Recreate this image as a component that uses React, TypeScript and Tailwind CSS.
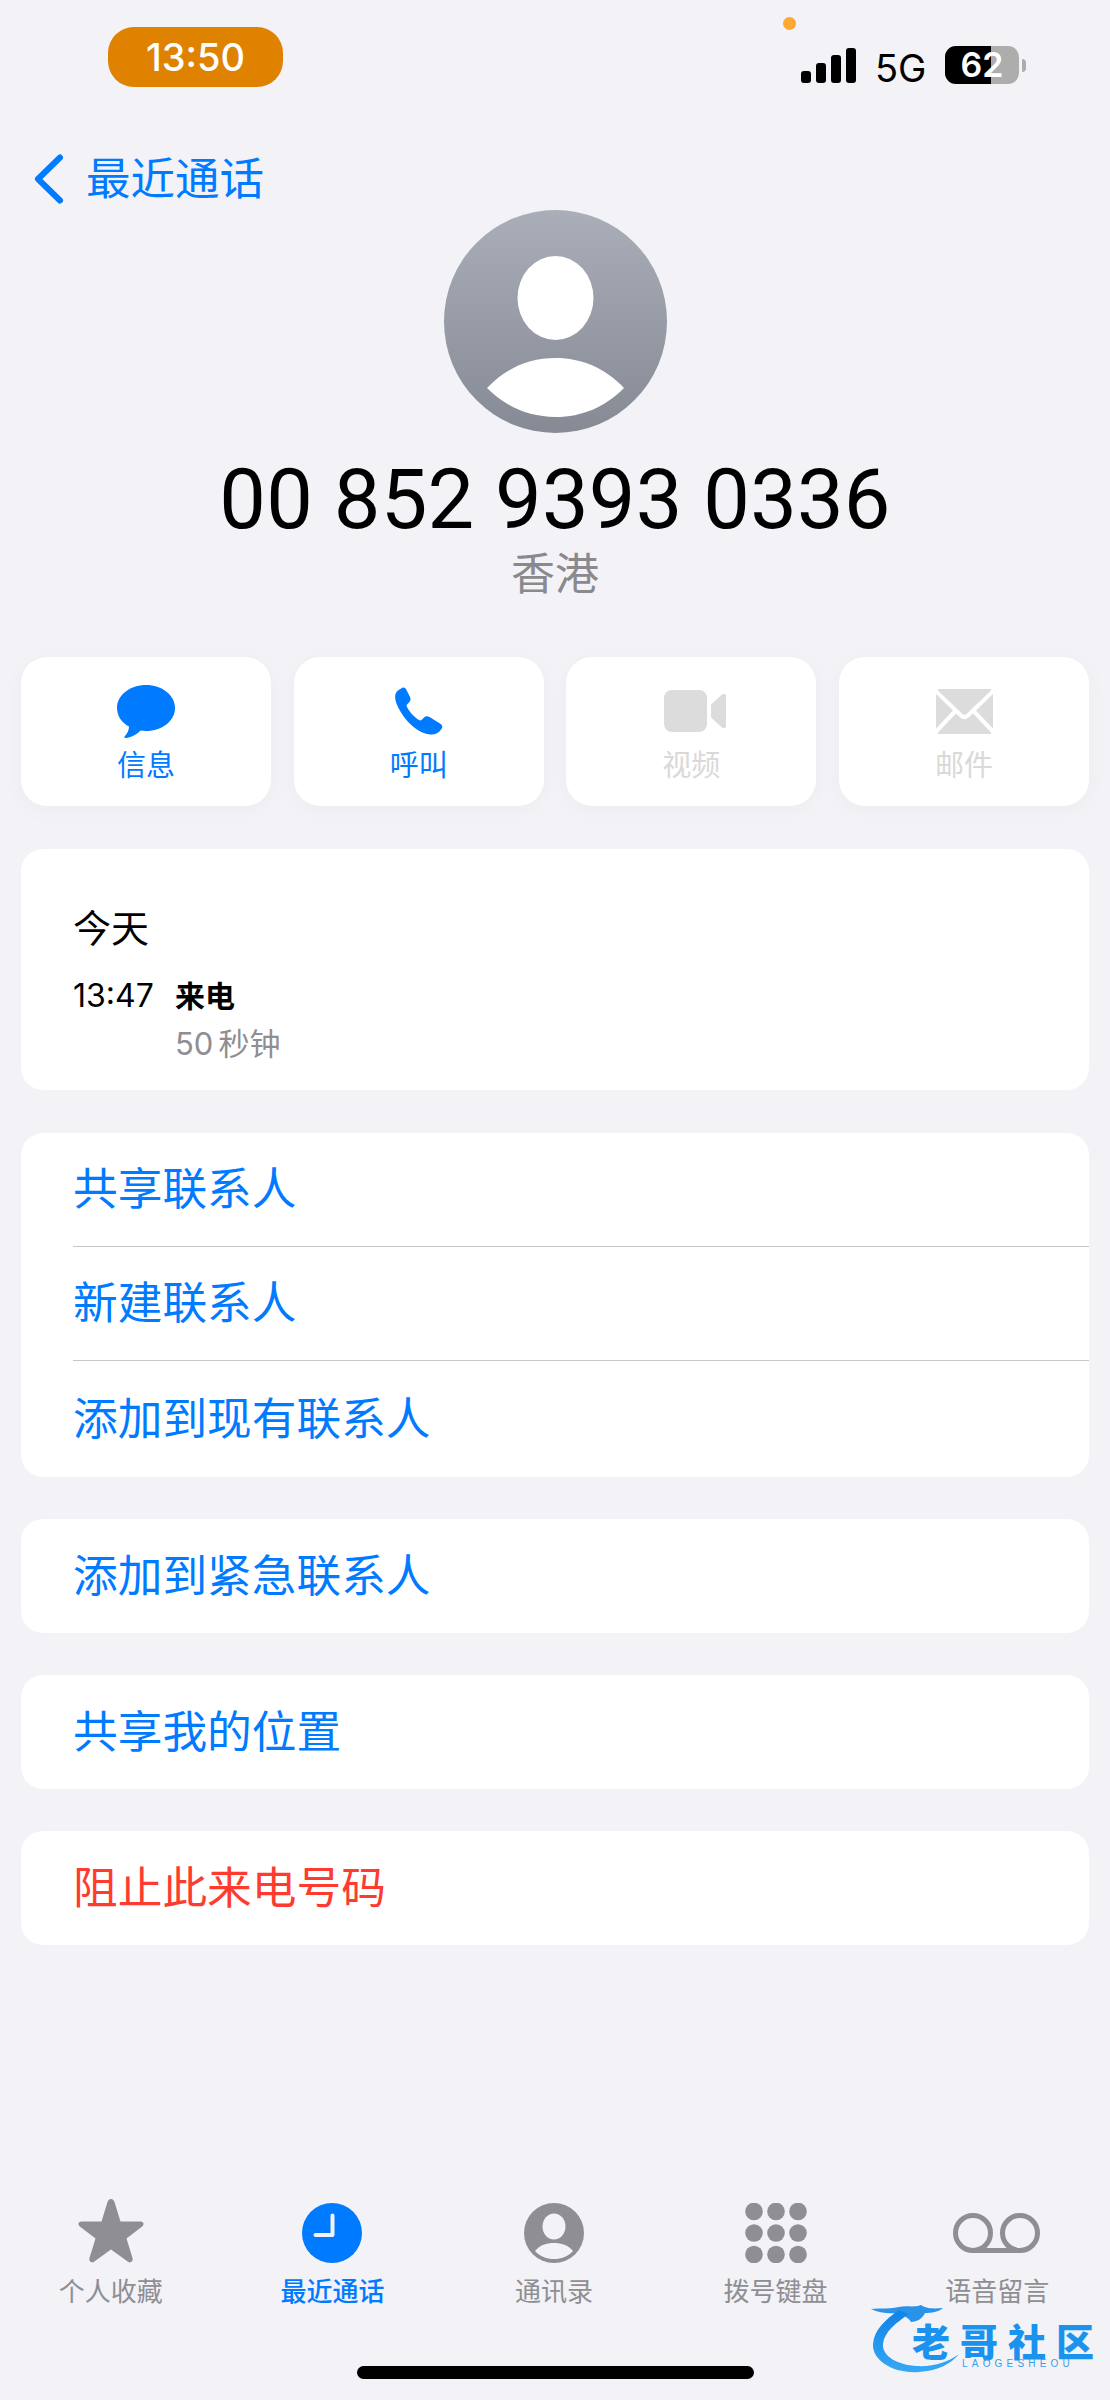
import React from "react";

const ACTIONS = [
  { label: "信息", on: true, icon: <svg width="58" height="53" viewBox="0 0 58 53"><path fill="#007aff" d="M29 0C45 0 58 10 58 23C58 36 45 46 29 46C27 46 25 45.800 23.500 45.500C20 49.500 14 52.500 8.500 53C7.500 53 7 52 7.800 51.200C10 49 12 45.500 12 41.500C4.500 37.500 0 30.800 0 23C0 10 13 0 29 0Z" /></svg> },
  { label: "呼叫", on: true, icon: <svg width="49" height="48" viewBox="0 0 49 48"><path fill="#007aff" d="M8 1C10 0 11.500 1 12.500 3L16 10C17 12.500 16.500 14 15 15.500L13 17.500C12.500 18.200 12.500 19 13 20C15.500 25 20.500 30.500 25 33C26 33.500 27 33.500 27.500 33L30 30.500C31.500 29 33.500 29 35.500 30L46 36.500C48.500 38 49 40 47.500 42C44.500 46 41 48 36 47.500C26 46.500 15 38 8 27C3 19 0 12 1.500 7C2.500 4 5 2.500 8 1Z" /></svg> },
  { label: "视频", on: false, icon: <svg className="ml-[7px]" width="62" height="42" viewBox="0 0 62 42"><rect x="0" y="0" width="43" height="42" rx="8" fill="#dcdcdc" /><path fill="#dcdcdc" d="M47 14.500L58 4.500C59.500 3.300 62 3.800 62 6V36C62 38.200 59.500 38.700 58 37.500L47 27.500Z" /></svg> },
  { label: "邮件", on: false, icon: <svg width="57" height="45" viewBox="0 0 57 45"><path fill="#dcdcdc" d="M3 0H54C55 0 55.500 .8 55 1.500L30.500 25C29.300 26.200 27.700 26.200 26.500 25L2 1.500C1.500 .8 2 0 3 0Z" /><path fill="#dcdcdc" d="M0 5L17 21.500L0 39.500Z M57 5L40 21.500L57 39.500Z" /><path fill="#dcdcdc" d="M20 24.500L24 28.300C26.800 30.800 30.200 30.800 33 28.300L37 24.500L55 43.500C55.500 44.300 55 45 54 45H3C2 45 1.500 44.300 2 43.500Z" /></svg> },
];

function Row({ label, red, line }: { label: string; red?: boolean; line?: boolean }) {
  return (
    <div className="pl-[52px] h-[114px] flex flex-col">
      <div className={`flex-1 flex items-center text-[44.700px] leading-none ${red ? "text-[#ff3b30]" : "text-[#007aff]"} ${line ? "border-b border-[#c6c6c8]" : ""}`}>
        {label}
      </div>
    </div>
  );
}

const TABS = [
  { label: "个人收藏", icon: <svg width="66" height="64" viewBox="0 0 66 64"><path fill="#8e8e93" d="M33 0C35 0 36 1.500 36.500 3L42.500 22.500H62.500C65.500 22.500 66.500 25.500 64.500 27.200L48.500 39.500L54.500 59C55.500 62.500 52.500 64.500 50 62.800L33 50.500L16 62.800C13.500 64.500 10.500 62.500 11.500 59L17.500 39.500L1.500 27.200C-.5 25.500 .5 22.500 3.500 22.500H23.500L29.500 3C30 1.500 31 0 33 0Z" /></svg> },
  { label: "最近通话", active: true, icon: <svg width="60" height="60" viewBox="0 0 60 60"><circle cx="30" cy="30" r="30" fill="#007aff" /><path d="M30.500 12.500V32H13.500" fill="none" stroke="#f2f2f7" strokeWidth="4" strokeLinecap="round" strokeLinejoin="round" /></svg> },
  { label: "通讯录", icon: <svg width="60" height="60" viewBox="0 0 60 60"><circle cx="30" cy="30" r="30" fill="#8e8e93" /><ellipse cx="30" cy="23.500" rx="11.500" ry="13" fill="#f2f2f7" /><path fill="#f2f2f7" d="M11 48C16 42 22.500 40 30 40C37.500 40 44 42 49 48C44 53.500 37.500 56 30 56C22.500 56 16 53.500 11 48Z" /></svg> },
  { label: "拨号键盘", icon: <svg width="62" height="60" viewBox="0 0 62 60">{[9, 31, 53].flatMap((x) => [8.500, 30, 51.500].map((y) => <circle key={`${x}-${y}`} cx={x} cy={y} r="8.800" fill="#8e8e93" />))}</svg> },
  { label: "语音留言", icon: <svg width="90" height="60" viewBox="0 0 90 60"><g fill="none" stroke="#8e8e93" strokeWidth="5"><circle cx="21" cy="30" r="17.500" /><circle cx="68" cy="30" r="17.500" /><path d="M21 47.500H68" /></g></svg> },
];

function Watermark() {
  return (
    <div className="absolute left-[871px] top-[2300px] w-[224px] h-[74px]">
      <svg className="absolute left-0 top-0" width="224" height="74" viewBox="0 0 224 74">
        <defs>
          <linearGradient id="dr" x1="0" y1="0" x2="0" y2="1">
            <stop offset="0" stopColor="#0f82e6" />
            <stop offset="1" stopColor="#35a8f5" />
          </linearGradient>
        </defs>
        <path fill="url(#dr)" d="M28 10C14 20 3 30 2 44C1 60 22 74 48 72C66 71 80 64 88 54C78 62 62 67 46 66C26 65 11 56 12 44C13 32 26 22 38 14Z" />
        <path fill="#1388e8" opacity=".9" d="M0 9C10 8 20 9 28 7C36 5 42 8 50 5C54 8 60 9 72 8C68 12 60 13 54 13C52 18 46 22 40 22C38 18 32 15 26 13C18 14 8 13 0 9Z" />
      </svg>
      <div className="absolute left-[41px] top-[23px] w-[182px] h-[34px] flex justify-between text-[38px] leading-[34px] font-black text-[#1b93ee] font-['Noto_Sans_CJK_SC',sans-serif]">
        <span>老</span><span>哥</span><span>社</span><span>区</span>
      </div>
      <div className="absolute left-[91px] top-[58px] text-[10px] leading-[11px] tracking-[4.200px] font-medium text-[#3a9fe8] font-['Liberation_Sans',sans-serif]">LAOGESHEOU</div>
    </div>
  );
}

export default function App() {
  return (
    <div className="relative w-[1110px] h-[2400px] bg-[#f2f2f7] flex flex-col overflow-hidden font-['Inter','Noto_Sans_CJK_SC',sans-serif]">
      {/* status bar */}
      <div className="h-[154px] pt-[17px] flex-none flex items-start justify-between">
        <div className="ml-[108px] mt-[10px] w-[175px] h-[60px] rounded-[26px] bg-[#df8200] text-white text-[38px] leading-none font-medium flex items-center justify-center">13:50</div>
        <div className="relative mr-[84px] mt-[29px] flex items-end h-[38px]">
          <div className="absolute left-[-18px] top-[-29px] w-[13px] h-[13px] rounded-full bg-[#ffa733]" />
          <div className="flex items-end gap-[5px] h-[36px] mb-[1px]">
            <div className="w-[10px] h-[12px] rounded-[3px] bg-black" />
            <div className="w-[10px] h-[20px] rounded-[3px] bg-black" />
            <div className="w-[10px] h-[28px] rounded-[3px] bg-black" />
            <div className="w-[10px] h-[35px] rounded-[3px] bg-black" />
          </div>
          <div className="ml-[19px] mb-[-3px] w-[53px] text-[38px] leading-[38px] font-normal text-black">5G</div>
          <div className="relative ml-[17px] w-[74px] h-[38px] rounded-[11px] bg-[#adadad] text-white text-[34px] font-semibold leading-[38px] text-center">
            <div className="absolute left-0 top-0 h-full w-[46px] bg-black rounded-l-[11px]" />
            <span className="relative">62</span>
          </div>
          <div className="ml-[3px] mb-[12px] w-[4px] h-[13px] rounded-r-full bg-[#adadad]" />
        </div>
      </div>

      {/* nav */}
      <div className="h-[50px] flex-none flex items-center pl-[33px] relative">
        <svg width="32" height="50" viewBox="0 0 32 50"><path d="M27 3.500L5 25L27 46.500" fill="none" stroke="#007aff" strokeWidth="6" strokeLinecap="round" strokeLinejoin="round" /></svg>
        <span className="ml-[21px] text-[44.500px] leading-none text-[#007aff]">最近通话</span>
      </div>

      {/* header */}
      <div className="flex flex-col items-center flex-none mt-[6px]">
        <div className="relative w-[223px] h-[223px] rounded-full overflow-hidden bg-gradient-to-b from-[#a9aeb9] to-[#858a94]">
          <svg className="absolute inset-0" width="223" height="223" viewBox="0 0 223 223">
            <ellipse cx="111.500" cy="88" rx="38" ry="42" fill="#fff" />
            <path fill="#fff" d="M43 178C62 158 85 148 111.500 148C138 148 161 158 180 178C161 197 138 207 111.500 207C85 207 62 197 43 178Z" />
          </svg>
        </div>
        <div className="mt-[17px] text-[83px] leading-[100px] font-normal text-black tracking-[0.2px] font-['Roboto','Noto_Sans_CJK_SC',sans-serif]">00 852 9393 0336</div>
        <div className="mt-[-3px] text-[44px] leading-[54px] text-[#8a8a8e]">香港</div>
      </div>

      {/* actions */}
      <div className="mt-[56px] px-[21px] grid grid-cols-4 gap-[22.700px] flex-none">
        {ACTIONS.map((a) => (
          <div key={a.label} className="h-[149px] rounded-[26px] bg-white shadow-[0_4px_24px_rgba(0,0,0,0.03)] flex flex-col items-center">
            <div className="h-[54px] mt-[27px] flex items-center justify-center">{a.icon}</div>
            <div className={`mt-[10px] text-[29px] leading-[36px] ${a.on ? "text-[#007aff]" : "text-[#d9d9d9]"}`}>{a.label}</div>
          </div>
        ))}
      </div>

      {/* history */}
      <div className="mt-[43px] mx-[21px] h-[241px] rounded-[22px] bg-white pl-[52px] flex-none flex flex-col">
        <div className="mt-[56px] text-[38px] leading-[46px] text-black">今天</div>
        <div className="mt-[25px] flex items-start">
          <div className="w-[102px] text-[32px] leading-[40px] text-black">13:47</div>
          <div className="flex flex-col">
            <div className="text-[30px] leading-[40px] font-bold text-black">来电</div>
            <div className="mt-[8px] text-[31px] leading-[40px] text-[#8e8e93] flex gap-[5px]"><span>50</span><span>秒钟</span></div>
          </div>
        </div>
      </div>

      <div className="mt-[43px] mx-[21px] pb-[1px] rounded-[22px] bg-white overflow-hidden flex-none">
        <Row label="共享联系人" line />
        <Row label="新建联系人" line />
        <div className="pt-[1px]"><Row label="添加到现有联系人" /></div>
      </div>
      <div className="mt-[42px] mx-[21px] rounded-[22px] bg-white overflow-hidden flex-none"><Row label="添加到紧急联系人" /></div>
      <div className="mt-[42px] mx-[21px] rounded-[22px] bg-white overflow-hidden flex-none"><Row label="共享我的位置" /></div>
      <div className="mt-[42px] mx-[21px] rounded-[22px] bg-white overflow-hidden flex-none"><Row label="阻止此来电号码" red /></div>

      {/* tabs */}
      <div className="mt-auto grid grid-cols-5 pr-[2px] flex-none">
        {TABS.map((t) => (
          <div key={t.label} className="flex flex-col items-center">
            <div className="h-[64px] flex items-end justify-center">{t.icon}</div>
            <div className={`mt-[13px] text-[26px] leading-[32px] ${t.active ? "text-[#007aff] font-medium" : "text-[#8e8e93]"}`}>{t.label}</div>
          </div>
        ))}
      </div>
      <div className="mt-[58px] mb-[21px] mx-auto w-[397px] h-[13px] rounded-full bg-black flex-none" />

      <Watermark />
    </div>
  );
}
